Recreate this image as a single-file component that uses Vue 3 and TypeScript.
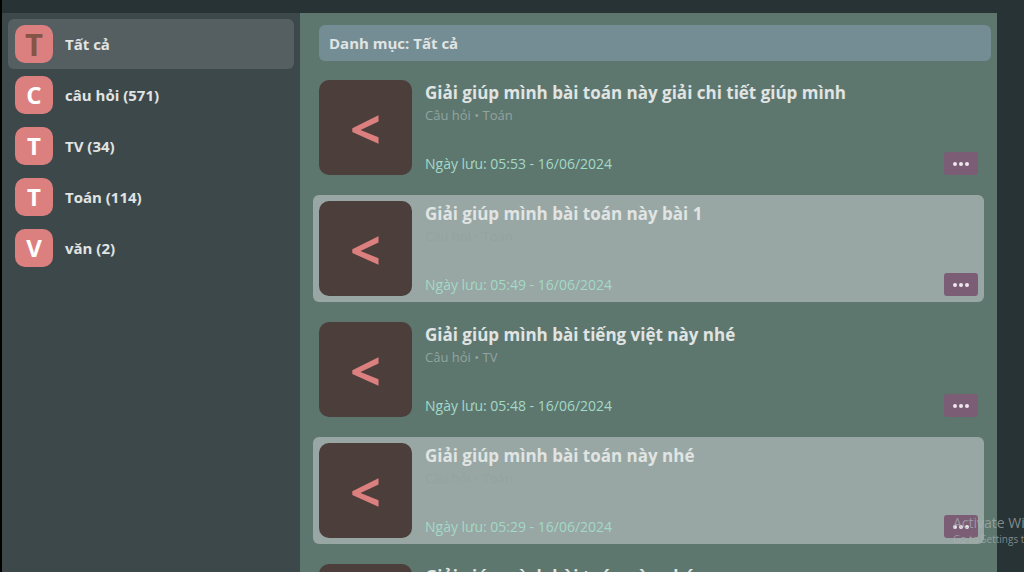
<script setup lang="ts">
import { ref } from 'vue'

interface Category {
  id: string
  letter: string
  label: string
}

interface SavedItem {
  id: number
  title: string
  meta: string
  savedAt: string
}

const categories: Category[] = [
  { id: 'all', letter: 'T', label: 'Tất cả' },
  { id: 'question', letter: 'C', label: 'câu hỏi (571)' },
  { id: 'tv', letter: 'T', label: 'TV (34)' },
  { id: 'math', letter: 'T', label: 'Toán (114)' },
  { id: 'literature', letter: 'V', label: 'văn (2)' },
]

const items: SavedItem[] = [
  { id: 1, title: 'Giải giúp mình bài toán này giải chi tiết giúp mình', meta: 'Câu hỏi • Toán', savedAt: '05:53 - 16/06/2024' },
  { id: 2, title: 'Giải giúp mình bài toán này bài 1', meta: 'Câu hỏi • Toán', savedAt: '05:49 - 16/06/2024' },
  { id: 3, title: 'Giải giúp mình bài tiếng việt này nhé', meta: 'Câu hỏi • TV', savedAt: '05:48 - 16/06/2024' },
  { id: 4, title: 'Giải giúp mình bài toán này nhé', meta: 'Câu hỏi • Toán', savedAt: '05:29 - 16/06/2024' },
  { id: 5, title: 'Giải giúp mình bài toán này nhé', meta: 'Câu hỏi • Toán', savedAt: '05:27 - 16/06/2024' },
]

const selected = ref('all')
</script>

<template>
  <div class="page">
    <div class="panel">
      <nav class="sidebar">
        <button
          v-for="c in categories"
          :key="c.id"
          type="button"
          class="category"
          :class="{ active: c.id === selected }"
          @click="selected = c.id"
        >
          <span class="letter">{{ c.letter }}</span>
          <span>{{ c.label }}</span>
        </button>
      </nav>
      <main class="content">
        <h1 class="heading">Danh mục: Tất cả</h1>
        <ul class="list">
          <li v-for="item in items" :key="item.id" class="card">
            <div class="thumb">&lt;</div>
            <div class="body">
              <h2 class="title">{{ item.title }}</h2>
              <p class="meta">{{ item.meta }}</p>
              <div class="foot">
                <span class="date">Ngày lưu: {{ item.savedAt }}</span>
                <button type="button" class="more" aria-label="Tùy chọn">
                  <svg width="16" height="4" viewBox="0 0 16 4" aria-hidden="true">
                    <circle cx="2" cy="2" r="2" />
                    <circle cx="8" cy="2" r="2" />
                    <circle cx="14" cy="2" r="2" />
                  </svg>
                </button>
              </div>
            </div>
          </li>
        </ul>
      </main>
    </div>
    <div class="watermark">
      <p class="wm-title">Activate Windows</p>
      <p class="wm-text">Go to Settings to activate Windows.</p>
    </div>
  </div>
</template>

<style>
body {
  background: #283335;
}
</style>

<style scoped>
.page {
  position: relative;
  box-sizing: border-box;
  height: 100vh;
  overflow: hidden;
  padding: 13px 27px 0 0;
  border-left: 2px solid #000;
  background: #283335;
  font-family: "Open Sans", "Noto Sans", sans-serif;
  color: #e0e4e3;
}

.panel {
  display: grid;
  grid-template-columns: 298px 1fr;
  height: 100%;
}

.sidebar {
  display: flex;
  flex-direction: column;
  gap: 1px;
  padding: 6px;
  background: #3d484b;
}

.category {
  display: flex;
  align-items: center;
  gap: 12px;
  padding: 6px 7px;
  border: 0;
  border-radius: 6px;
  background: none;
  color: inherit;
  font: bold 15px/20px "Open Sans", "Noto Sans", sans-serif;
  text-align: left;
  cursor: pointer;
}

.category.active {
  background: #555e60;
}

.letter {
  display: flex;
  align-items: center;
  justify-content: center;
  width: 38px;
  height: 38px;
  border-radius: 10px;
  background: #dc7f7f;
  color: #fff;
  font-size: 24px;
}

.active .letter {
  color: #845547;
  font-size: 31px;
}

.content {
  padding: 12px 6px 0 13px;
  background: #5d776f;
}

.heading {
  margin: 0 0 13px 6px;
  padding: 8px 10px;
  border-radius: 6px;
  background: #748c93;
  font-size: 15px;
  line-height: 20px;
}

.list {
  display: flex;
  flex-direction: column;
  gap: 14px;
  margin: 0 7px 0 0;
  padding: 0;
  list-style: none;
}

.card {
  display: flex;
  gap: 13px;
  padding: 6px;
  border-radius: 6px;
}

.card:nth-child(even) {
  background: #98a7a3;
}

.thumb {
  display: flex;
  flex: none;
  align-items: center;
  justify-content: center;
  width: 93px;
  height: 95px;
  border-radius: 10px;
  background: #4b3e3b;
  color: #dc7f7f;
  font-size: 54px;
  font-weight: 700;
  line-height: 60px;
}

.body {
  display: flex;
  flex: 1;
  flex-direction: column;
}

.title {
  margin: 0;
  font-size: 17px;
  line-height: 25px;
}

.meta {
  margin: 0;
  color: #94a39f;
  font-size: 13px;
  line-height: 20px;
}

.foot {
  display: flex;
  align-items: center;
  justify-content: space-between;
  margin-top: auto;
}

.date {
  color: #a3d9c8;
  font-size: 14px;
  line-height: 20px;
}

.more {
  display: flex;
  align-items: center;
  justify-content: center;
  width: 34px;
  height: 23px;
  padding: 0;
  border: 0;
  border-radius: 3px;
  background: #7b5d75;
  cursor: pointer;
}

.more svg {
  fill: #eee6ee;
}

.watermark {
  position: absolute;
  right: 0;
  bottom: 26px;
  width: 71px;
  overflow: hidden;
  color: rgba(170, 178, 178, 0.7);
  white-space: nowrap;
  pointer-events: none;
}

.watermark p {
  margin: 0;
}

.wm-title {
  font-size: 14px;
  line-height: 18px;
}

.wm-text {
  font-size: 10px;
  line-height: 14px;
}
</style>
